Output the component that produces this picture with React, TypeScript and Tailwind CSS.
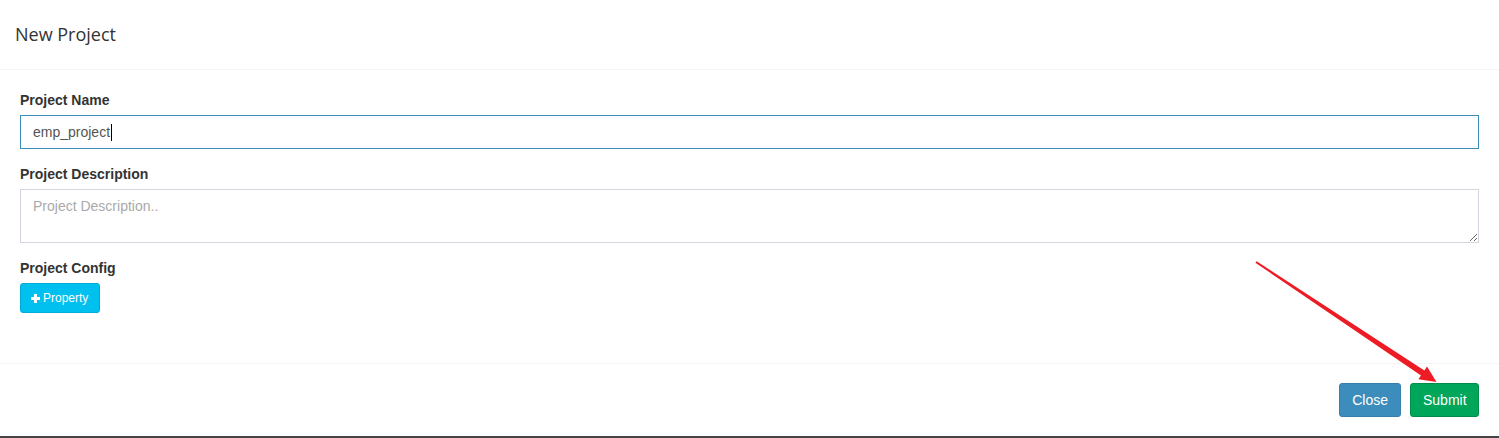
import React from "react";

function PlusIcon() {
  return (
    <svg width="9" height="9" viewBox="0 0 9 9" className="mr-[3px]">
      <path d="M3 0h3v3h3v3H6v3H3V6H0V3h3z" fill="#fff" />
    </svg>
  );
}

export default function App() {
  return (
    <div className="relative w-full h-[438px] bg-white font-['Liberation_Sans',Arial,sans-serif] text-[14px] text-[#333]">
      <div className="h-[70px] border-b border-[#f4f4f4] px-[15px] flex items-center">
        <h4 className="font-['Open_Sans',sans-serif] text-[18px] text-[#333] leading-[26px] -mt-px">New Project</h4>
      </div>

      <div className="h-[293px] px-5 pt-5">
        <div className="mb-[15px]">
          <label className="block font-bold leading-5 mb-[5px]">Project Name</label>
          <div className="h-[34px] border border-[#3c8dbc] px-3 flex items-center text-[#555]">
            <span>emp_project</span>
            <span className="w-px h-[17px] bg-black ml-px" />
          </div>
        </div>

        <div className="mb-[15px]">
          <label className="block font-bold leading-5 mb-[5px]">Project Description</label>
          <textarea
            rows={2}
            placeholder="Project Description.."
            className="block w-full h-[54px] border border-[#d2d6de] px-3 py-[6px] leading-5 text-[#555] placeholder:text-[#aaa] outline-none"
          />
        </div>

        <div>
          <label className="block font-bold leading-5 mb-[5px]">Project Config</label>
          <button className="h-[30px] w-[80px] px-[10px] flex items-center rounded-[3px] bg-[#00c0ef] border border-[#00acd6] text-white text-[12px]">
            <PlusIcon />
            Property
          </button>
        </div>
      </div>

      <div className="h-[73px] border-t border-[#f4f4f4] pt-[19px] pr-5 flex justify-end items-start gap-[9px]">
        <button className="h-[34px] px-3 rounded-[3px] bg-[#3c8dbc] border border-[#367fa9] text-white">
          Close
        </button>
        <button className="h-[34px] w-[69px] px-3 rounded-[3px] bg-[#00a65a] border border-[#008d4c] text-white">
          Submit
        </button>
      </div>
      <div className="h-[2px] bg-[#444]" />

      <svg className="absolute inset-0 pointer-events-none" width="1499" height="438" viewBox="0 0 1499 438">
        <polygon
          points="1256.6,261.2 1424.4,370.4 1427,366.6 1436.5,382 1418.4,379.2 1421,375.4 1255.4,262.8"
          fill="#ed1c24"
        />
      </svg>
    </div>
  );
}
